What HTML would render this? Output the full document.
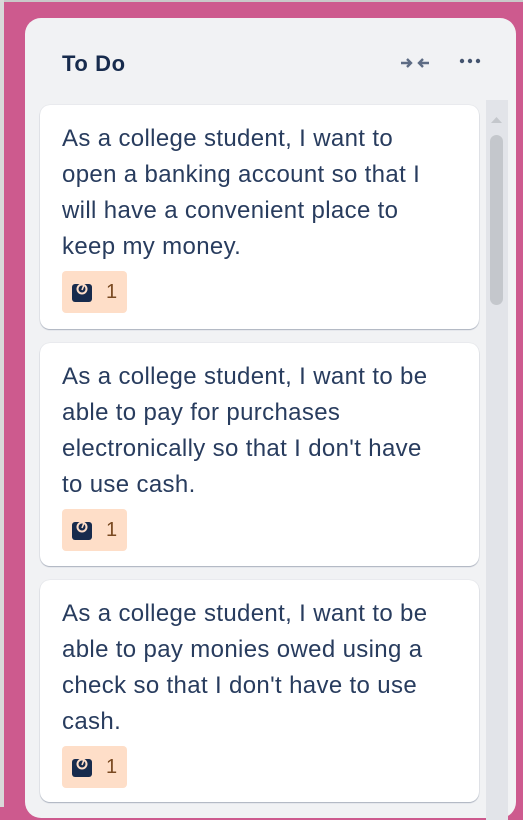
<!DOCTYPE html>
<html><head><style>
html,body{margin:0;padding:0;width:523px;height:807px;overflow:hidden;background:#cd5a8e;font-family:"Liberation Sans",sans-serif}
.edge{position:absolute;left:0;top:0;width:4px;height:807px;background:#d9d9d9}
.top{position:absolute;left:0;top:0;width:523px;height:2px;background:#c9c9c9}
.col{position:absolute;left:25px;top:18px;width:491px;height:800px;background:#f1f2f4;border-radius:16px}
.title{position:absolute;left:37px;top:33px;font-size:22px;font-weight:bold;color:#172b4d;letter-spacing:0.6px}
.track{position:absolute;left:461px;top:82px;width:22px;height:720px;background:#e2e4e9}
.thumb{position:absolute;left:465px;top:117px;width:13px;height:170px;background:#c4c7cc;border-radius:7px}
.card{position:absolute;left:15px;width:439px;background:#fff;border-radius:10px;box-shadow:0 1px 1px #a9b0bd,0 0 1px #c0c4cc}
.txt{position:absolute;left:22px;top:16px;font-size:24px;line-height:36px;color:#283c5e;white-space:nowrap;letter-spacing:0.35px}
.badge{position:absolute;left:22px;width:65px;height:42px;background:#fedec8;border-radius:4px}
.badge span{position:absolute;left:44px;top:10px;font-size:20px;color:#7a4a22}
</style></head><body>
<div class="top"></div><div class="edge"></div>
<div class="col">
<div class="title">To Do</div>
<svg style="position:absolute;left:374px;top:38px" width="32" height="14" viewBox="0 0 32 14"><path d="M2 7h10M8 3l4 4-4 4M30 7H20M24 3l-4 4 4 4" stroke="#5e6c84" stroke-width="2.4" fill="none"/></svg>
<svg style="position:absolute;left:434px;top:40px" width="22" height="6"><circle cx="3" cy="3" r="2.2" fill="#44546f"/><circle cx="11" cy="3" r="2.2" fill="#44546f"/><circle cx="19" cy="3" r="2.2" fill="#44546f"/></svg>
<div class="track"></div><div class="thumb"></div>
<svg style="position:absolute;left:465px;top:98px" width="13" height="8"><path d="M1 7L6.5 1 12 7z" fill="#c4c7cc"/></svg>
<div class="card" style="top:87px;height:224px"><div class="txt">As a college student, I want to<br>open a banking account so that I<br>will have a convenient place to<br>keep my money.</div>
<div class="badge" style="top:166px"><svg style="position:absolute;left:9px;top:10px" width="22" height="22" viewBox="0 0 22 22"><path d="M4 3h14a3 3 0 0 1 3 3v12a3 3 0 0 1-3 3H4a3 3 0 0 1-3-3V6a3 3 0 0 1 3-3z" fill="#172b4d"/><circle cx="11" cy="8" r="5.5" fill="#fedec8"/><circle cx="11" cy="8" r="3.5" fill="#172b4d"/><path d="M11 9l2-5" stroke="#fedec8" stroke-width="1.6"/></svg><span>1</span></div></div>
<div class="card" style="top:325px;height:223px"><div class="txt">As a college student, I want to be<br>able to pay for purchases<br>electronically so that I don't have<br>to use cash.</div>
<div class="badge" style="top:166px"><svg style="position:absolute;left:9px;top:10px" width="22" height="22" viewBox="0 0 22 22"><path d="M4 3h14a3 3 0 0 1 3 3v12a3 3 0 0 1-3 3H4a3 3 0 0 1-3-3V6a3 3 0 0 1 3-3z" fill="#172b4d"/><circle cx="11" cy="8" r="5.5" fill="#fedec8"/><circle cx="11" cy="8" r="3.5" fill="#172b4d"/><path d="M11 9l2-5" stroke="#fedec8" stroke-width="1.6"/></svg><span>1</span></div></div>
<div class="card" style="top:562px;height:222px"><div class="txt">As a college student, I want to be<br>able to pay monies owed using a<br>check so that I don't have to use<br>cash.</div>
<div class="badge" style="top:166px"><svg style="position:absolute;left:9px;top:10px" width="22" height="22" viewBox="0 0 22 22"><path d="M4 3h14a3 3 0 0 1 3 3v12a3 3 0 0 1-3 3H4a3 3 0 0 1-3-3V6a3 3 0 0 1 3-3z" fill="#172b4d"/><circle cx="11" cy="8" r="5.5" fill="#fedec8"/><circle cx="11" cy="8" r="3.5" fill="#172b4d"/><path d="M11 9l2-5" stroke="#fedec8" stroke-width="1.6"/></svg><span>1</span></div></div>
</div>
</body></html>
